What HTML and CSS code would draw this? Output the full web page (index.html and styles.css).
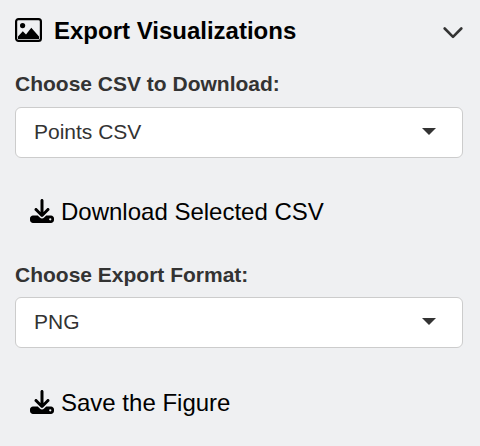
FILE: index.html
```html
<!DOCTYPE html>
<html lang="en">
<head>
<meta charset="utf-8">
<title>Export Visualizations</title>
<link rel="stylesheet" href="styles.css">
</head>
<body>
<main class="panel">
  <header class="panel-header">
    <svg class="image-icon" viewBox="0 0 27 24" aria-hidden="true">
      <rect x="1.1" y="1.1" width="24.8" height="21.8" rx="2.4" fill="none" stroke="currentColor" stroke-width="2.200"/>
      <circle cx="7.600" cy="7.600" r="2.600"/>
      <path d="M3 21v-2.500l4.800-5.300 3.200 3.300 5.300-6.700L24 18.500V21z"/>
    </svg>
    <h1 class="panel-title">Export Visualizations</h1>
    <svg class="chevron" viewBox="0 0 20 12" aria-hidden="true">
      <path d="M1.700 1.500L10 9.800l8.300-8.300" fill="none" stroke="currentColor" stroke-width="2.600" stroke-linecap="round" stroke-linejoin="round"/>
    </svg>
  </header>
  <section class="field">
    <div class="label">Choose CSV to Download:</div>
    <div class="select"><span>Points CSV</span><i class="caret"></i></div>
    <a class="action">
      <svg class="download-icon" viewBox="0 0 512 512" aria-hidden="true"><path d="M288 32c0-17.700-14.300-32-32-32s-32 14.300-32 32V274.700l-73.400-73.400c-12.500-12.500-32.800-12.500-45.300 0s-12.500 32.800 0 45.300l128 128c12.500 12.500 32.800 12.500 45.300 0l128-128c12.500-12.500 12.500-32.800 0-45.300s-32.800-12.500-45.300 0L288 274.700V32zM64 352c-35.300 0-64 28.700-64 64v32c0 35.300 28.700 64 64 64H448c35.300 0 64-28.700 64-64V416c0-35.300-28.700-64-64-64H346.500l-45.300 45.300c-25 25-65.500 25-90.500 0L165.500 352H64zm368 56a24 24 0 1 1 0 48 24 24 0 1 1 0-48z"/></svg>
      <span>Download Selected CSV</span>
    </a>
  </section>
  <section class="field field-compact">
    <div class="label">Choose Export Format:</div>
    <div class="select"><span>PNG</span><i class="caret"></i></div>
    <a class="action">
      <svg class="download-icon" viewBox="0 0 512 512" aria-hidden="true"><path d="M288 32c0-17.700-14.300-32-32-32s-32 14.300-32 32V274.700l-73.400-73.400c-12.500-12.500-32.800-12.500-45.300 0s-12.500 32.800 0 45.300l128 128c12.500 12.500 32.800 12.500 45.300 0l128-128c12.500-12.500 12.500-32.800 0-45.300s-32.800-12.500-45.300 0L288 274.700V32zM64 352c-35.300 0-64 28.700-64 64v32c0 35.300 28.700 64 64 64H448c35.300 0 64-28.700 64-64V416c0-35.300-28.700-64-64-64H346.500l-45.300 45.300c-25 25-65.500 25-90.500 0L165.500 352H64zm368 56a24 24 0 1 1 0 48 24 24 0 1 1 0-48z"/></svg>
      <span>Save the Figure</span>
    </a>
  </section>
</main>
</body>
</html>
```
FILE: styles.css
```css
* { box-sizing: border-box; }
body {
  margin: 0;
  background: #eff0f2;
  color: #333;
  font-family: "Liberation Sans", Arial, sans-serif;
}
.panel {
  height: 446px;
  padding: 16px 17px 0 15px;
  overflow: hidden;
}
.panel-header {
  display: flex;
  align-items: center;
  height: 30px;
  margin-bottom: 23px;
}
.image-icon {
  width: 27px;
  height: 24px;
  margin: 0 12px 2px 0;
  color: #000;
}
.panel-title {
  margin: 0;
  color: #000;
  font-size: 24px;
  line-height: 30px;
}
.chevron {
  width: 20px;
  height: 12px;
  margin: 3px 0 0 auto;
}
.label {
  height: 30px;
  margin-bottom: 8px;
  font-size: 21px;
  font-weight: bold;
  line-height: 30px;
}
.select {
  display: flex;
  align-items: center;
  justify-content: space-between;
  height: 51px;
  padding: 0 26px 2px 18px;
  border: 1px solid #ccc;
  border-radius: 6px;
  background: #fff;
  font-size: 21px;
}
.caret {
  border: 7px solid transparent;
  border-top-color: #333;
  border-bottom: 0;
}
.action {
  display: flex;
  align-items: center;
  gap: 7px;
  height: 30px;
  margin: 39px 0 33px 15px;
  color: #000;
  font-size: 24px;
  line-height: 30px;
}
.download-icon {
  width: 24px;
  height: 24px;
  margin-bottom: 2px;
}
.field-compact .label { margin-bottom: 7px; }
.field-compact .action { margin-top: 40px; }
svg {
  display: block;
  flex: none;
  fill: currentColor;
}
```
